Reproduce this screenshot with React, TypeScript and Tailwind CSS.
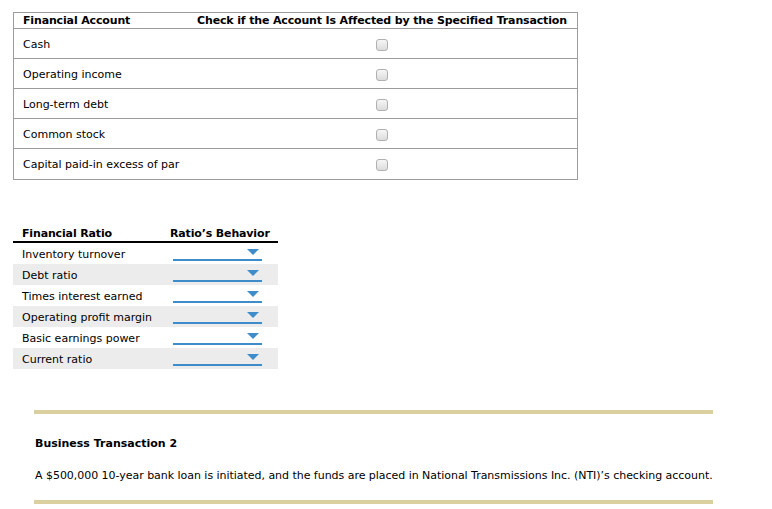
const ACCOUNTS = ['Cash', 'Operating income', 'Long-term debt', 'Common stock', 'Capital paid-in excess of par'];

const RATIOS = [
  'Inventory turnover',
  'Debt ratio',
  'Times interest earned',
  'Operating profit margin',
  'Basic earnings power',
  'Current ratio',
];

function Checkbox() {
  return (
    <span className="block w-[12px] h-[12px] rounded-[3px] border border-[#b0b0b0] bg-gradient-to-b from-[#f6f6f6] to-[#dcdcdc]" />
  );
}

function Dropdown() {
  return (
    <div className="relative w-[89px] h-[14px] border-b-2 border-[#3f8ccb]">
      <svg className="absolute right-[3px] top-[2px]" width="12" height="6" viewBox="0 0 12 6">
        <polygon points="0,0 12,0 6,6" fill="#3f8ccb" />
      </svg>
    </div>
  );
}

export default function App() {
  return (
    <div className="bg-white w-[772px] h-[509px] text-black text-[11px] leading-none" style={{ fontFamily: 'Verdana, "DejaVu Sans", sans-serif' }}>
      <div className="pt-[12px] pl-[13px]">
        {/* accounts table */}
        <div className="w-[565px] border border-[#9c9c9c]">
          <div className="grid grid-cols-[172px_1fr] h-[16px] items-center border-b border-[#9c9c9c] font-bold tracking-[-0.15px]">
            <div className="pl-[9px]">Financial Account</div>
            <div className="text-center pl-[1px]">Check if the Account Is Affected by the Specified Transaction</div>
          </div>
          {ACCOUNTS.map((a, i) => (
            <div
              key={a}
              className={`grid grid-cols-[172px_1fr] h-[30px] items-center ${i < ACCOUNTS.length - 1 ? 'border-b border-[#9c9c9c]' : ''}`}
            >
              <div className="pl-[9px] pt-[1px]">{a}</div>
              <div className="flex justify-center pt-[2px]">
                <Checkbox />
              </div>
            </div>
          ))}
        </div>

        {/* ratios table */}
        <div className="w-[265px] mt-[46px]">
          <div className="grid grid-cols-[157px_1fr] h-[17px] items-center border-b-2 border-black font-bold tracking-[-0.15px]">
            <div className="pl-[9px]">Financial Ratio</div>
            <div>Ratio’s Behavior</div>
          </div>
          {RATIOS.map((r, i) => (
            <div key={r} className={`grid grid-cols-[157px_1fr] h-[21px] items-center ${i % 2 === 1 ? 'bg-[#ececec]' : ''}`}>
              <div className="pl-[9px] pt-[1px]">{r}</div>
              <div className="pl-[3px]">
                <Dropdown />
              </div>
            </div>
          ))}
        </div>
      </div>

      {/* transaction */}
      <div className="ml-[34px] mt-[41px] w-[679px] border-t-4 border-b-4 border-[#dacf9f]">
        <div className="pt-[24px] pl-[1px] font-bold">Business Transaction 2</div>
        <div className="pt-[21px] pb-[19px] pl-[1px] whitespace-nowrap tracking-[-0.035px]">
          A $500,000 10-year bank loan is initiated, and the funds are placed in National Transmissions Inc. (NTI)’s checking account.
        </div>
      </div>
    </div>
  );
}
